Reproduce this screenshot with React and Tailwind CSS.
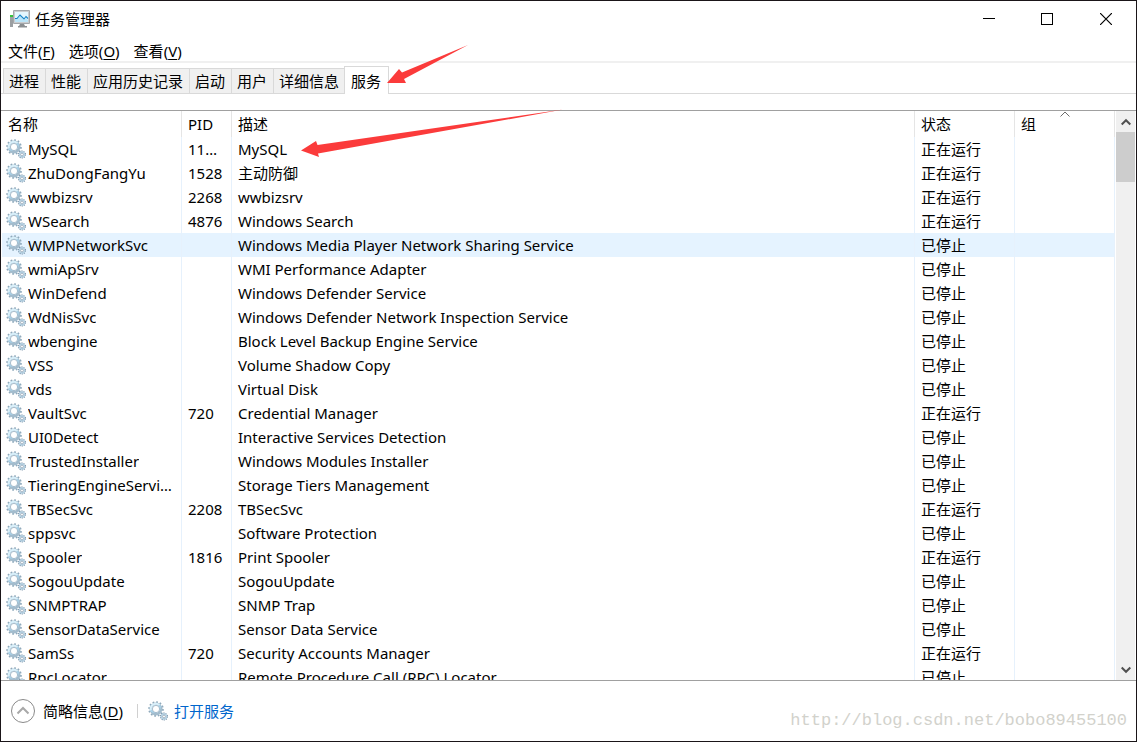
import React from 'react';

const menuItems = [
  { label: '文件', shortcut: 'F' },
  { label: '选项', shortcut: 'O' },
  { label: '查看', shortcut: 'V' },
];

const tabs = ['进程', '性能', '应用历史记录', '启动', '用户', '详细信息', '服务'];

const RUNNING = '正在运行';
const STOPPED = '已停止';

const services = [
  { name: 'MySQL', pid: '11332', desc: 'MySQL', status: RUNNING },
  { name: 'ZhuDongFangYu', pid: '1528', desc: '主动防御', status: RUNNING },
  { name: 'wwbizsrv', pid: '2268', desc: 'wwbizsrv', status: RUNNING },
  { name: 'WSearch', pid: '4876', desc: 'Windows Search', status: RUNNING },
  { name: 'WMPNetworkSvc', pid: '', desc: 'Windows Media Player Network Sharing Service', status: STOPPED },
  { name: 'wmiApSrv', pid: '', desc: 'WMI Performance Adapter', status: STOPPED },
  { name: 'WinDefend', pid: '', desc: 'Windows Defender Service', status: STOPPED },
  { name: 'WdNisSvc', pid: '', desc: 'Windows Defender Network Inspection Service', status: STOPPED },
  { name: 'wbengine', pid: '', desc: 'Block Level Backup Engine Service', status: STOPPED },
  { name: 'VSS', pid: '', desc: 'Volume Shadow Copy', status: STOPPED },
  { name: 'vds', pid: '', desc: 'Virtual Disk', status: STOPPED },
  { name: 'VaultSvc', pid: '720', desc: 'Credential Manager', status: RUNNING },
  { name: 'UI0Detect', pid: '', desc: 'Interactive Services Detection', status: STOPPED },
  { name: 'TrustedInstaller', pid: '', desc: 'Windows Modules Installer', status: STOPPED },
  { name: 'TieringEngineService', pid: '', desc: 'Storage Tiers Management', status: STOPPED },
  { name: 'TBSecSvc', pid: '2208', desc: 'TBSecSvc', status: RUNNING },
  { name: 'sppsvc', pid: '', desc: 'Software Protection', status: STOPPED },
  { name: 'Spooler', pid: '1816', desc: 'Print Spooler', status: RUNNING },
  { name: 'SogouUpdate', pid: '', desc: 'SogouUpdate', status: STOPPED },
  { name: 'SNMPTRAP', pid: '', desc: 'SNMP Trap', status: STOPPED },
  { name: 'SensorDataService', pid: '', desc: 'Sensor Data Service', status: STOPPED },
  { name: 'SamSs', pid: '720', desc: 'Security Accounts Manager', status: RUNNING },
  { name: 'RpcLocator', pid: '', desc: 'Remote Procedure Call (RPC) Locator', status: STOPPED },
];

function GearsIcon() {
  return (
    <svg width="20" height="20" viewBox="0 0 20 20" fill="none" className="shrink-0">
      <circle cx="8" cy="8" r="6.9" stroke="#8fa9bb" strokeWidth="1.8" strokeDasharray="1.7 1.91" />
      <circle cx="8" cy="8" r="5.1" stroke="#a3bccd" strokeWidth="2.8" />
      <path d="M3 9.500a5.200 5.200 0 0 1 8.500-5.300" stroke="#d9f0fa" strokeWidth="2" />
      <path d="M11.500 4.200a5.200 5.200 0 0 1-8.500 5.300" stroke="#a9d6ee" strokeWidth="2" />
      <circle cx="8" cy="8" r="3.6" fill="#fff" stroke="#8ba5b9" strokeWidth=".7" />
      <circle cx="16" cy="15.500" r="3.4" stroke="#7089a0" strokeWidth="1.2" strokeDasharray="1.2 .94" />
      <circle cx="16" cy="15.500" r="2.500" fill="#fff" stroke="#b3d0e2" strokeWidth="1.4" />
      <circle cx="16" cy="15.500" r="1.4" fill="#fff" stroke="#7089a0" strokeWidth=".6" />
    </svg>
  );
}

function AppIcon() {
  return (
    <svg width="20" height="18" viewBox="0 0 20 18" className="shrink-0">
      <rect x="0" y="5" width="3" height="12" fill="#9b9fa2" />
      <rect x="0" y="5" width="3" height="2" fill="#35c43c" />
      <rect x="3" y="0" width="17" height="14" rx="1" fill="#a3a7aa" />
      <rect x="4" y="1" width="15" height="12" fill="#c9cccf" />
      <rect x="5" y="2" width="13" height="10" fill="#e3f6fe" />
      <path d="M5 9h2l3-3 4 4 2-2 2 2v2H5z" fill="#b9e4f8" />
      <path d="M5 8.500h2L10 5l4 4 2-2.500 2 2" fill="none" stroke="#1684c8" strokeWidth="1.100" />
      <path d="M10 14h4l1 2h2v1.500H8V16h1z" fill="#8b8f92" />
    </svg>
  );
}

function Chevron({ down }) {
  return (
    <svg width="10" height="8" viewBox="0 0 10 8" fill="none" stroke="#505050" strokeWidth="2">
      <path d={down ? 'M.7 1.500L5 5.800l4.300-4.300' : 'M.7 6.500L5 2.200l4.300 4.300'} />
    </svg>
  );
}

function TitleBar() {
  return (
    <header className="flex h-9 items-center justify-between pl-[9px]">
      <div className="flex items-center gap-[5px]">
        <AppIcon />
        <h1>任务管理器</h1>
      </div>
      <div className="flex">
        <button aria-label="最小化" className="flex h-9 w-[58px] items-center justify-center">
          <svg width="12" height="12" viewBox="0 0 12 12" stroke="#000" shapeRendering="crispEdges">
            <path d="M0 5.500h12" />
          </svg>
        </button>
        <button aria-label="最大化" className="flex h-9 w-[58px] items-center justify-center">
          <svg width="12" height="12" viewBox="0 0 12 12" fill="none" stroke="#000" shapeRendering="crispEdges">
            <path d="M.5.5h11v11H.5z" />
          </svg>
        </button>
        <button aria-label="关闭" className="flex h-9 w-[60px] items-center justify-center">
          <svg width="12" height="12" viewBox="0 0 12 12" stroke="#000" strokeWidth="1.200">
            <path d="M0 0l12 12M12 0L0 12" />
          </svg>
        </button>
      </div>
    </header>
  );
}

function ServiceTable() {
  const th = 'border-r border-[#e5e5e5] px-[6px] text-left font-normal';
  const td = 'truncate border-r border-[#e6f1fc] px-[6px]';

  return (
    <table className="w-full table-fixed border-separate border-spacing-0">
      <colgroup>
        <col className="w-[180px]" />
        <col className="w-[50px]" />
        <col />
        <col className="w-[100px]" />
        <col className="w-[100px]" />
      </colgroup>
      <thead>
        <tr className="h-[26px]">
          <th className={th}>名称</th>
          <th className={th}>PID</th>
          <th className={th}>描述</th>
          <th className={th}>状态</th>
          <th className={`${th} relative`}>
            组
            <svg width="10" height="6" viewBox="0 0 10 6" fill="none" stroke="#6b6b6b" className="absolute top-0 left-1/2 -translate-x-1/2">
              <path d="M.5 5.500L5 1l4.500 4.500" />
            </svg>
          </th>
        </tr>
      </thead>
      <tbody>
        {services.map((service) => (
          <tr
            key={service.name}
            className={`h-6 ${service.name === 'WMPNetworkSvc' ? 'bg-[#e5f3ff]' : ''}`}
          >
            <td className={td}>
              <div className="-ml-0.5 flex items-center gap-0.5">
                <GearsIcon />
                <span className="truncate">{service.name}</span>
              </div>
            </td>
            <td className={td}>{service.pid}</td>
            <td className={td}>{service.desc}</td>
            <td className={td}>{service.status}</td>
            <td className={td}></td>
          </tr>
        ))}
      </tbody>
    </table>
  );
}

function Arrows() {
  return (
    <svg width="600" height="180" viewBox="0 0 600 180" fill="#fb3b3b" className="pointer-events-none absolute top-0 left-0">
      <path d="M386 82L398 68l3 3.500L467 44 403 78l2 4z" />
      <path d="M300 149.500L315 140l1.500 4L562 108.500 317 152.500l1 3.500z" />
    </svg>
  );
}

function App() {
  return (
    <div className="relative flex h-screen flex-col border border-[#1a1518] bg-white font-['Noto_Sans','Noto_Sans_CJK_SC',sans-serif] text-[15px] leading-6 text-black">
      <TitleBar />

      <nav className="box-content flex h-6 gap-[14px] border-b-2 border-[#f0f0f0] pl-[7px]">
        {menuItems.map((item) => (
          <button key={item.shortcut} className="pt-0.5">
            {item.label}(<u className="underline-offset-2">{item.shortcut}</u>)
          </button>
        ))}
      </nav>

      <div role="tablist" className="flex h-[31px] items-end border-b border-[#d9d9d9] pl-0.5">
        {tabs.map((tab) =>
          tab === '服务' ? (
            <button key={tab} role="tab" aria-selected="true" className="-mb-px -ml-px h-7 border border-b-0 border-[#d9d9d9] bg-white pr-[7px] pl-[6px]">
              {tab}
            </button>
          ) : (
            <button key={tab} role="tab" aria-selected="false" className="h-[25px] border-t border-l border-[#d9d9d9] bg-[#f0f0f0] pr-[6px] pl-[5px]">
              {tab}
            </button>
          )
        )}
      </div>

      <main className="mt-4 flex min-h-0 flex-1 border-y border-[#a0a0a0] px-px">
        <div className="min-w-0 flex-1 overflow-hidden">
          <ServiceTable />
        </div>
        <div className="ml-px flex w-[19px] flex-col bg-[#f0f0f0]">
          <button aria-label="向上滚动" className="flex h-[21px] items-center justify-center">
            <Chevron />
          </button>
          <div className="h-[50px] bg-[#cdcdcd]" />
          <button aria-label="向下滚动" className="mt-auto flex h-[21px] items-center justify-center">
            <Chevron down />
          </button>
        </div>
      </main>

      <footer className="flex h-[60px] items-center justify-between pr-[9px] pl-[9px]">
        <div className="flex items-center">
          <button className="flex items-center gap-[7px]">
            <svg width="26" height="26" viewBox="0 0 26 26" fill="none">
              <circle cx="13" cy="13" r="11.500" stroke="#8a8a8a" />
              <path d="M7.500 15.500L13 10l5.500 5.500" stroke="#a8a8a8" strokeWidth="2" />
            </svg>
            <span>
              简略信息(<u className="underline-offset-2">D</u>)
            </span>
          </button>
          <span className="mr-[10px] ml-[14px] h-[14px] w-px bg-[#d0d0d0]" />
          <a href="#services" className="flex items-center gap-[6px] text-[#0066cc]">
            <GearsIcon />
            打开服务
          </a>
        </div>
        <span className="mt-5 font-['Liberation_Mono',monospace] text-[17px] text-[#d2d2cc]">
          http://blog.csdn.net/bobo89455100
        </span>
      </footer>

      <Arrows />
    </div>
  );
}

export default App;
